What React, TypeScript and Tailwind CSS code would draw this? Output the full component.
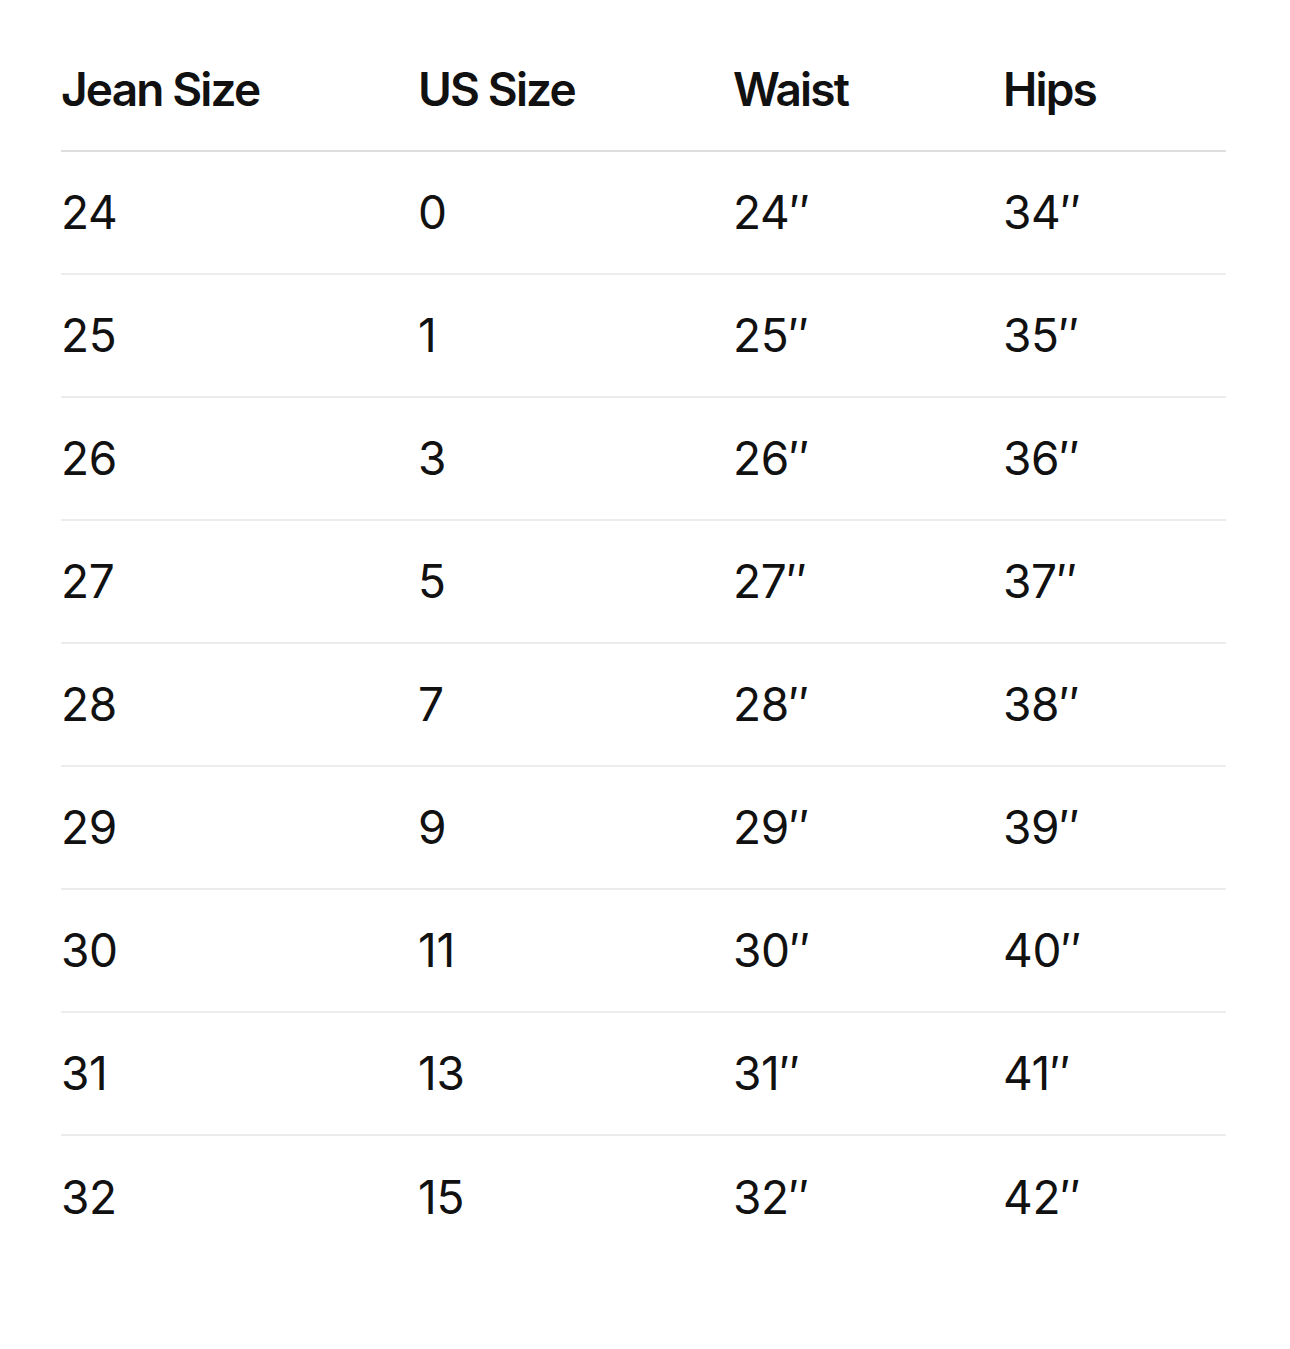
const rows = [
  ['24', '0', '24″', '34″'],
  ['25', '1', '25″', '35″'],
  ['26', '3', '26″', '36″'],
  ['27', '5', '27″', '37″'],
  ['28', '7', '28″', '38″'],
  ['29', '9', '29″', '39″'],
  ['30', '11', '30″', '40″'],
  ['31', '13', '31″', '41″'],
  ['32', '15', '32″', '42″'],
];

const cols = 'grid grid-cols-[357px_315px_270px_1fr] items-center';

export default function App() {
  return (
    <div className="min-h-[1349px] w-[1290px] bg-white pt-[28px] pl-[61px] text-[#111111] font-['Inter','Liberation_Sans',sans-serif] tracking-[-0.02em]">
      <div className="w-[1165px]">
        <div className={`${cols} h-[124px] border-b-2 border-[#dedede] text-[46px] font-semibold tracking-[-0.04em]`}>
          <div>Jean Size</div>
          <div>US Size</div>
          <div>Waist</div>
          <div>Hips</div>
        </div>
        {rows.map((r, i) => (
          <div
            key={r[0]}
            className={`${cols} h-[123px] text-[46px] ${i < rows.length - 1 ? 'border-b-2 border-[#ececec]' : ''}`}
          >
            {r.map((c, j) => (
              <div key={j}>{c}</div>
            ))}
          </div>
        ))}
      </div>
    </div>
  );
}
